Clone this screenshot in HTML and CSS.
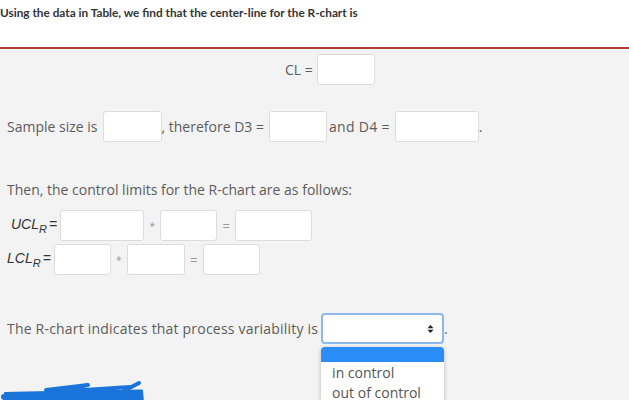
FILE: index.html
```html
<!DOCTYPE html>
<html>
<head>
<meta charset="utf-8">
<link rel="stylesheet" href="styles.css">
</head>
<body>
<div class="header">Using the data in Table, we find that the center-line for the R-chart is</div>
<div class="main">
  <div class="row cl-row">
    <span class="t">CL =</span>
    <span class="inp w58"></span>
  </div>
  <div class="row sample-row">
    <span class="t">Sample size is</span>
    <span class="inp w59"></span>
    <span class="t">, therefore D3 =</span>
    <span class="inp w58"></span>
    <span class="t d4">and D4 =</span>
    <span class="inp w84"></span>
    <span class="t">.</span>
  </div>
  <div class="then">Then, the control limits for the R-chart are as follows:</div>
  <div class="row ucl-row">
    <span class="math ucl">UCL<sub>R</sub>=</span>
    <span class="inp w84"></span>
    <span class="op">*</span>
    <span class="inp w57"></span>
    <span class="op eq">=</span>
    <span class="inp w77"></span>
  </div>
  <div class="row lcl-row">
    <span class="math">LCL<sub>R</sub>=</span>
    <span class="inp w57"></span>
    <span class="op">*</span>
    <span class="inp w58"></span>
    <span class="op eq">=</span>
    <span class="inp w57"></span>
  </div>
  <div class="row sel-row">
    <span class="t">The R-chart indicates that process variability is</span>
    <span class="select-wrap">
      <span class="select">
        <svg class="arrows" width="7" height="8" viewBox="0 0 7 8"><path d="M0.5 3.2 L3.5 0 L6.5 3.2 Z M0.5 4.8 L3.5 8 L6.5 4.8 Z" fill="#222"/></svg>
      </span>
      <span class="dropdown">
        <span class="opt sel"></span>
        <span class="opt">in control</span>
        <span class="opt">out of control</span>
      </span>
    </span>
    <span class="t">.</span>
  </div>
  <svg class="scribble" width="150" height="30" viewBox="0 0 150 30">
    <g fill="#1a74da" stroke="#1a74da" stroke-linejoin="round" stroke-linecap="round">
      <path d="M5 18 L50 17 L142 15.5 L143 27.5 L60 29 L5 26.5 Z" stroke-width="2"/>
      <path d="M46 15 L88 10 L55 17 L130 12" fill="none" stroke-width="4"/>
      <path d="M118 19 L139 8" fill="none" stroke-width="4"/>
      <path d="M4 22 L20 21" fill="none" stroke-width="6"/>
    </g>
  </svg>
</div>
</body>
</html>
```
FILE: styles.css
```css
html, body { margin: 0; padding: 0; }
body { background: #f3f3f3; font-family: "Open Sans", sans-serif; color: #5c5c5c; font-size: 14px; width: 629px; height: 400px; overflow: hidden; }
.header { background: #fff; height: 49px; box-sizing: border-box; padding-top: 5px; font-family: Lato, sans-serif; font-weight: bold; font-size: 11.8px; color: #333; border-bottom: 2px solid #b23c3a; }
.main { padding-left: 7px; position: relative; height: 351px; }
.row { display: flex; align-items: center; }
.inp { display: inline-block; height: 31px; box-sizing: border-box; background: #fff; border: 1px solid #dcdcdc; border-radius: 3px; }
.w57 { width: 57px; } .w58 { width: 58px; } .w59 { width: 59px; } .w77 { width: 77px; } .w84 { width: 84px; }
.cl-row { margin-top: 5px; padding-left: 278px; }
.cl-row .t { margin-right: 4px; }
.sample-row { margin-top: 26px; }
.sample-row .t { margin-right: 4px; }
.sample-row .t + .inp { margin-left: 1px; }
.sample-row .d4 { margin-left: 2px; letter-spacing: 0.3px; }
.then { margin-top: 39px; line-height: 18px; }
.ucl-row { margin-top: 11px; }
.lcl-row { margin-top: 3px; }
.math { font-family: "Liberation Sans", sans-serif; font-style: italic; color: #333; font-size: 14px; margin-right: 3px; }
.math.ucl { margin-left: 4px; }
.math sub { font-size: 11px; vertical-align: -4px; margin-right: 2px; }
.op { width: 16px; text-align: center; font-size: 10px; color: #999; }
.eq { width: 18px; font-size: 13px; }
.sel-row { margin-top: 38px; }
.sel-row > .t:first-child { letter-spacing: 0.2px; }
.select-wrap { position: relative; margin-left: 3px; }
.select { display: block; width: 123px; height: 31px; box-sizing: border-box; background: #fff; border: 2px solid #8ab8ef; border-radius: 4px; position: relative; }
.arrows { position: absolute; right: 8px; top: 10px; display: block; }
.dropdown { position: absolute; left: 0; top: 34px; width: 123px; background: #fff; border-radius: 4px 4px 0 0; box-shadow: 0 1px 4px rgba(0,0,0,0.25); display: flex; flex-direction: column; }
.opt { height: 20px; line-height: 22px; padding-left: 11px; color: #555; white-space: nowrap; }
.opt.sel { height: 15px; background: #2a8cf7; border-radius: 4px 4px 0 0; }
.scribble { position: absolute; left: 0; top: 321px; }
```
